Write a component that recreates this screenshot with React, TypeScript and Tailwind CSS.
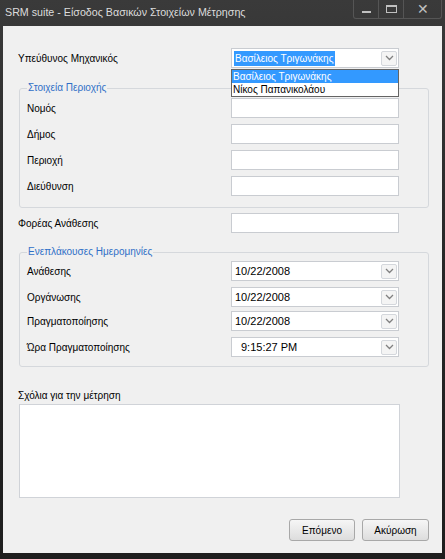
import React from "react";

function Chevron() {
  return (
    <svg width="9" height="6" viewBox="0 0 9 6">
      <path d="M1 1 L4.5 4.5 L8 1" stroke="#808080" strokeWidth="1.3" fill="none" />
    </svg>
  );
}

function DropBtn() {
  return (
    <div className="w-[16px] h-[15px] border border-[#d4d7dc] bg-[#f4f4f4] rounded-[2px] flex items-center justify-center">
      <Chevron />
    </div>
  );
}

function TextBox() {
  return <div className="w-[168px] h-[20px] bg-white border border-[#c9ccd1]" />;
}

function DatePicker({ value, pad }: { value: string; pad: string }) {
  return (
    <div className="w-[168px] h-[20px] bg-white border border-[#c9ccd1] flex items-center justify-between pr-[1px]">
      <span className={pad + " text-[11px]"}>{value}</span>
      <DropBtn />
    </div>
  );
}

function Row({ label, children, labelW }: { label: string; children: React.ReactNode; labelW: string }) {
  return (
    <div className="flex items-center h-[20px]">
      <div className={labelW + " pt-[1px]"}>{label}</div>
      {children}
    </div>
  );
}

export default function App() {
  return (
    <div className="w-[445px] h-[559px] bg-gradient-to-b from-[#3a3a3a] via-[#262626] to-[#1e1e1e] flex flex-col font-['Liberation_Sans','Noto_Sans',Arial,sans-serif] text-[10px] text-black overflow-hidden">
      {/* Title bar */}
      <div className="h-[26px] flex items-start justify-between">
        <div className="pl-[5px] pt-[5px] text-[10.7px] leading-[14px] text-[#dcdcdc]">
          SRM suite - Είσοδος Βασικών Στοιχείων Μέτρησης
        </div>
        <div className="flex mr-[3px] h-[19px] border border-t-0 border-[#555555] rounded-b-[3px] overflow-hidden">
          <div className="w-[25px] flex items-end justify-center pb-[5px] border-r border-[#555555]">
            <div className="w-[9px] h-[2px] bg-[#c0c0c0]" />
          </div>
          <div className="w-[25px] flex items-center justify-center border-r border-[#555555]">
            <div className="w-[11px] h-[8px] border border-[#c0c0c0] border-t-2" />
          </div>
          <div className="w-[37px] flex items-center justify-center text-[#c0c0c0] text-[14px] leading-none">
            ✕
          </div>
        </div>
      </div>

      {/* Client area */}
      <div className="mx-[3px] h-[527px] bg-[#f0f0f0] flex flex-col">
        {/* Responsible engineer */}
        <div className="mt-[22px] pl-[15px] flex items-center h-[20px]">
          <div className="w-[213px] pt-[1px]">Υπεύθυνος Μηχανικός</div>
          <div className="relative w-[168px] h-[20px] bg-white border border-[#c9ccd1] flex items-center justify-between pr-[1px]">
            <span className="ml-[2px] px-[1px] h-[15px] leading-[15px] bg-[#3399ff] text-white">Βασίλειος Τριγωνάκης</span>
            <DropBtn />
            <div className="absolute left-[-1px] top-[20px] w-[168px] h-[28px] bg-white border border-[#646464] flex flex-col z-10">
              <div className="h-[13px] leading-[13px] bg-[#3399ff] text-white pl-[1px]">Βασίλειος Τριγωνάκης</div>
              <div className="h-[13px] leading-[13px] pl-[1px]">Νίκος Παπανικολάου</div>
            </div>
          </div>
        </div>

        {/* Group 1 */}
        <fieldset className="mt-[13px] ml-[16px] mr-[13px] border border-[#d5d8dc] rounded-[3px] pl-[7px] pt-[3px] pb-[11px] flex flex-col gap-[6px]">
          <legend className="px-[1px] leading-[14px] text-[#2f6fc7]">Στοιχεία Περιοχής</legend>
          <Row label="Νομός" labelW="w-[204px]"><TextBox /></Row>
          <Row label="Δήμος" labelW="w-[204px]"><TextBox /></Row>
          <Row label="Περιοχή" labelW="w-[204px]"><TextBox /></Row>
          <Row label="Διεύθυνση" labelW="w-[204px]"><TextBox /></Row>
        </fieldset>

        <div className="mt-[5px] pl-[15px]">
          <Row label="Φορέας Ανάθεσης" labelW="w-[213px]"><TextBox /></Row>
        </div>

        {/* Group 2 */}
        <fieldset className="mt-[12px] ml-[16px] mr-[13px] border border-[#d5d8dc] rounded-[3px] pl-[7px] pt-[2px] pb-[9px] flex flex-col">
          <legend className="px-[1px] leading-[14px] text-[#2f6fc7]">Ενεπλάκουσες Ημερομηνίες</legend>
          <Row label="Ανάθεσης" labelW="w-[204px]"><DatePicker value="10/22/2008" pad="pl-[3px]" /></Row>
          <div className="mt-[6px]"><Row label="Οργάνωσης" labelW="w-[204px]"><DatePicker value="10/22/2008" pad="pl-[3px]" /></Row></div>
          <div className="mt-[4px]"><Row label="Πραγματοποίησης" labelW="w-[204px]"><DatePicker value="10/22/2008" pad="pl-[3px]" /></Row></div>
          <div className="mt-[6px]"><Row label="Ώρα Πραγματοποίησης" labelW="w-[204px]"><DatePicker value="9:15:27 PM" pad="pl-[9px]" /></Row></div>
        </fieldset>

        <div className="mt-[22px] pl-[15px] leading-[14px]">Σχόλια για την μέτρηση</div>
        <div className="mt-[1px] ml-[16px] w-[381px] h-[94px] bg-white border border-[#d0d3d8]" />

        <div className="mt-[21px] flex justify-end gap-[7px] mr-[13px]">
          <div className="w-[66px] h-[22px] border border-[#a8a8a8] rounded-[3px] bg-gradient-to-b from-[#f6f6f6] to-[#dddddd] flex items-center justify-center">
            Επόμενο
          </div>
          <div className="w-[67px] h-[22px] border border-[#a8a8a8] rounded-[3px] bg-gradient-to-b from-[#f6f6f6] to-[#dddddd] flex items-center justify-center">
            Ακύρωση
          </div>
        </div>
      </div>
    </div>
  );
}
